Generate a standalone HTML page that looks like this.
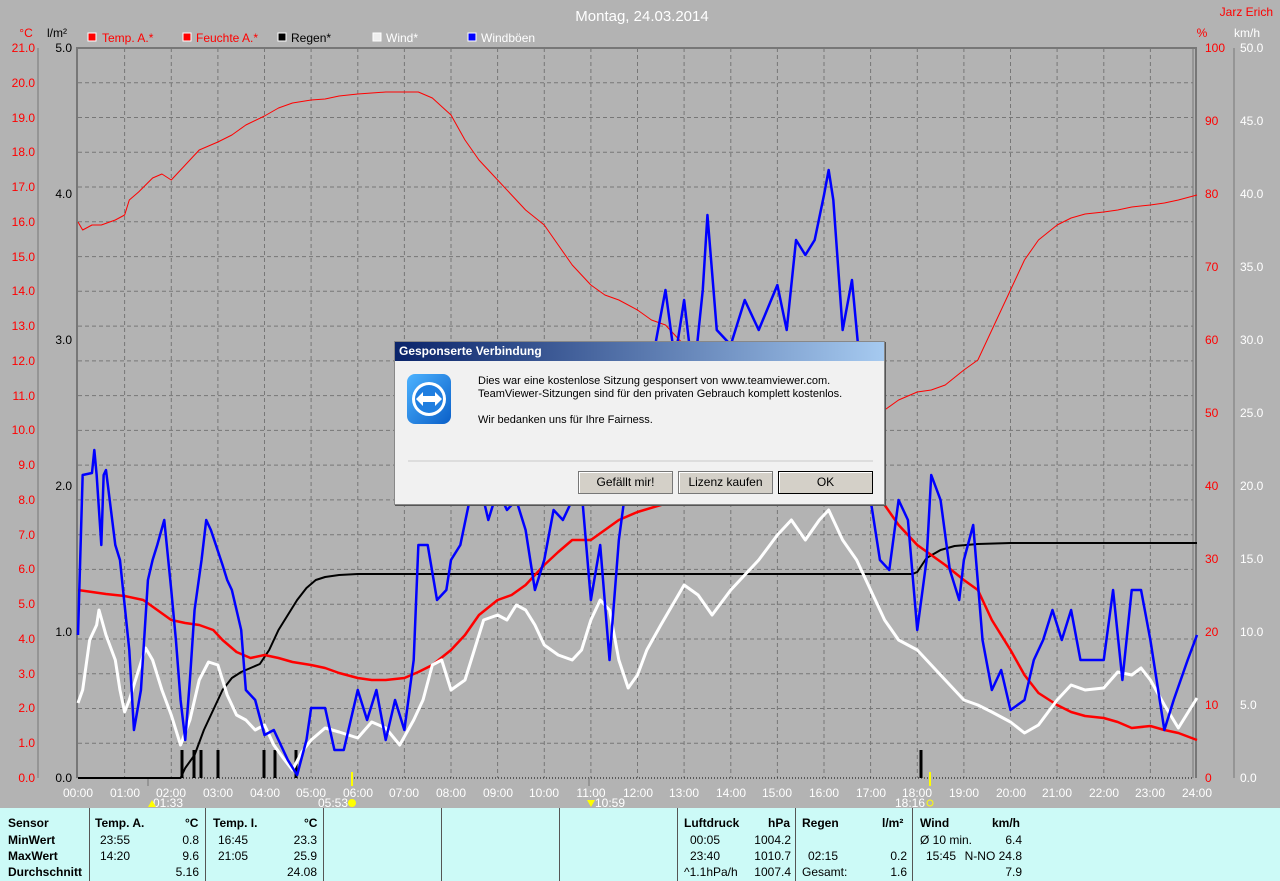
<!DOCTYPE html>
<html><head><meta charset="utf-8"><style>
html,body{margin:0;padding:0;background:#b3b3b3;width:1280px;height:881px;overflow:hidden;font-family:"Liberation Sans",sans-serif}
svg{position:absolute;left:0;top:0}
.tbl{position:absolute;left:0;top:808px;width:1280px;height:73px;background:#ccfaf7;font-size:12px;color:#000}
.sep{position:absolute;top:0;width:1px;height:73px;background:#555}
.t{position:absolute;white-space:nowrap}
.b{font-weight:bold}
.dlg{position:absolute;left:394px;top:341px;width:489px;height:162px;background:#f1f1f1;border:1px solid #888;box-shadow:1px 1px 0 #555}
.ttl{height:19px;background:linear-gradient(90deg,#0a246a,#a6caf0);color:#fff;font-weight:bold;font-size:12px;line-height:19px;padding-left:4px}
.btn{position:absolute;top:129px;height:21px;background:#d4d0c8;border:1px solid #777;font-size:12px;text-align:center;line-height:21px;box-shadow:inset 1px 1px 0 #fff}
</style></head><body>
<svg width="1280" height="808" font-family="Liberation Sans, sans-serif" font-size="12">
<text x="642" y="21" fill="#fff" font-size="15" text-anchor="middle">Montag, 24.03.2014</text>
<text x="1273" y="16" fill="#f00" text-anchor="end">Jarz Erich</text>
<text x="26" y="37" fill="#f00" text-anchor="middle">°C</text>
<text x="57" y="37" fill="#000" text-anchor="middle">l/m²</text>
<text x="1202" y="37" fill="#f00" text-anchor="middle">%</text>
<text x="1247" y="37" fill="#fff" text-anchor="middle">km/h</text>
<rect x="88" y="33" width="8" height="8" fill="#f00" stroke="#fff"/><text x="102" y="42" fill="#f00">Temp. A.*</text>
<rect x="183" y="33" width="8" height="8" fill="#f00" stroke="#fff"/><text x="196" y="42" fill="#f00">Feuchte A.*</text>
<rect x="278" y="33" width="8" height="8" fill="#000" stroke="#fff"/><text x="291" y="42" fill="#000">Regen*</text>
<rect x="373" y="33" width="8" height="8" fill="#eee" stroke="#fff"/><text x="386" y="42" fill="#fff">Wind*</text>
<rect x="468" y="33" width="8" height="8" fill="#00f" stroke="#fff"/><text x="481" y="42" fill="#fff">Windböen</text>
<!-- grid -->
<g stroke="#777" stroke-dasharray="4,3" stroke-width="1">
<line x1="78" x2="1193" y1="82.8" y2="82.8"/><line x1="78" x2="1193" y1="117.5" y2="117.5"/><line x1="78" x2="1193" y1="152.3" y2="152.3"/><line x1="78" x2="1193" y1="187" y2="187"/><line x1="78" x2="1193" y1="221.8" y2="221.8"/><line x1="78" x2="1193" y1="256.6" y2="256.6"/><line x1="78" x2="1193" y1="291.3" y2="291.3"/><line x1="78" x2="1193" y1="326.1" y2="326.1"/><line x1="78" x2="1193" y1="360.9" y2="360.9"/><line x1="78" x2="1193" y1="395.6" y2="395.6"/><line x1="78" x2="1193" y1="430.4" y2="430.4"/><line x1="78" x2="1193" y1="465.1" y2="465.1"/><line x1="78" x2="1193" y1="499.9" y2="499.9"/><line x1="78" x2="1193" y1="534.7" y2="534.7"/><line x1="78" x2="1193" y1="569.4" y2="569.4"/><line x1="78" x2="1193" y1="604.2" y2="604.2"/><line x1="78" x2="1193" y1="639" y2="639"/><line x1="78" x2="1193" y1="673.7" y2="673.7"/><line x1="78" x2="1193" y1="708.5" y2="708.5"/><line x1="78" x2="1193" y1="743.2" y2="743.2"/>
<line y1="48" y2="778" x1="124.6" x2="124.6"/><line y1="48" y2="778" x1="171.3" x2="171.3"/><line y1="48" y2="778" x1="217.9" x2="217.9"/><line y1="48" y2="778" x1="264.5" x2="264.5"/><line y1="48" y2="778" x1="311.1" x2="311.1"/><line y1="48" y2="778" x1="357.8" x2="357.8"/><line y1="48" y2="778" x1="404.4" x2="404.4"/><line y1="48" y2="778" x1="451" x2="451"/><line y1="48" y2="778" x1="497.6" x2="497.6"/><line y1="48" y2="778" x1="544.3" x2="544.3"/><line y1="48" y2="778" x1="590.9" x2="590.9"/><line y1="48" y2="778" x1="637.5" x2="637.5"/><line y1="48" y2="778" x1="684.1" x2="684.1"/><line y1="48" y2="778" x1="730.8" x2="730.8"/><line y1="48" y2="778" x1="777.4" x2="777.4"/><line y1="48" y2="778" x1="824" x2="824"/><line y1="48" y2="778" x1="870.6" x2="870.6"/><line y1="48" y2="778" x1="917.3" x2="917.3"/><line y1="48" y2="778" x1="963.9" x2="963.9"/><line y1="48" y2="778" x1="1010.5" x2="1010.5"/><line y1="48" y2="778" x1="1057.1" x2="1057.1"/><line y1="48" y2="778" x1="1103.8" x2="1103.8"/><line y1="48" y2="778" x1="1150.4" x2="1150.4"/>
</g>
<!-- frame -->
<g stroke="#777" fill="none">
<line x1="77" y1="48" x2="1197" y2="48" stroke-width="2"/>
<line x1="77" y1="47" x2="77" y2="778" stroke-width="2"/>
<line x1="1193" y1="48" x2="1193" y2="778"/><line x1="1196" y1="48" x2="1196" y2="778" stroke-width="2"/>
<line x1="38" y1="48" x2="38" y2="778"/><line x1="1234" y1="48" x2="1234" y2="778"/>
</g>
<line x1="78" y1="778" x2="1193" y2="778" stroke="#000" stroke-dasharray="1,2"/>
<!-- left temp labels -->
<g fill="#f00" text-anchor="end" font-size="12">
<text x="35" y="52">21.0</text><text x="35" y="87">20.0</text><text x="35" y="122">19.0</text><text x="35" y="156">18.0</text><text x="35" y="191">17.0</text><text x="35" y="226">16.0</text><text x="35" y="261">15.0</text><text x="35" y="295">14.0</text><text x="35" y="330">13.0</text><text x="35" y="365">12.0</text><text x="35" y="400">11.0</text><text x="35" y="434">10.0</text><text x="35" y="469">9.0</text><text x="35" y="504">8.0</text><text x="35" y="539">7.0</text><text x="35" y="573">6.0</text><text x="35" y="608">5.0</text><text x="35" y="643">4.0</text><text x="35" y="678">3.0</text><text x="35" y="712">2.0</text><text x="35" y="747">1.0</text><text x="35" y="782">0.0</text>
</g>
<g fill="#000" text-anchor="end"><text x="72" y="52">5.0</text><text x="72" y="198">4.0</text><text x="72" y="344">3.0</text><text x="72" y="490">2.0</text><text x="72" y="636">1.0</text><text x="72" y="782">0.0</text></g>
<g fill="#f00"><text x="1205" y="52">100</text><text x="1205" y="125">90</text><text x="1205" y="198">80</text><text x="1205" y="271">70</text><text x="1205" y="344">60</text><text x="1205" y="417">50</text><text x="1205" y="490">40</text><text x="1205" y="563">30</text><text x="1205" y="636">20</text><text x="1205" y="709">10</text><text x="1205" y="782">0</text></g>
<g fill="#fff"><text x="1240" y="52">50.0</text><text x="1240" y="125">45.0</text><text x="1240" y="198">40.0</text><text x="1240" y="271">35.0</text><text x="1240" y="344">30.0</text><text x="1240" y="417">25.0</text><text x="1240" y="490">20.0</text><text x="1240" y="563">15.0</text><text x="1240" y="636">10.0</text><text x="1240" y="709">5.0</text><text x="1240" y="782">0.0</text></g>
<!-- time labels -->
<g fill="#fff" text-anchor="middle">
<text x="78" y="797">00:00</text><text x="125" y="797">01:00</text><text x="171" y="797">02:00</text><text x="218" y="797">03:00</text><text x="265" y="797">04:00</text><text x="311" y="797">05:00</text><text x="358" y="797">06:00</text><text x="404" y="797">07:00</text><text x="451" y="797">08:00</text><text x="498" y="797">09:00</text><text x="544" y="797">10:00</text><text x="591" y="797">11:00</text><text x="638" y="797">12:00</text><text x="684" y="797">13:00</text><text x="731" y="797">14:00</text><text x="777" y="797">15:00</text><text x="824" y="797">16:00</text><text x="871" y="797">17:00</text><text x="917" y="797">18:00</text><text x="964" y="797">19:00</text><text x="1011" y="797">20:00</text><text x="1057" y="797">21:00</text><text x="1104" y="797">22:00</text><text x="1150" y="797">23:00</text><text x="1197" y="797">24:00</text>
<text x="168" y="807">01:33</text><text x="333" y="807">05:53</text><text x="610" y="807">10:59</text><text x="910" y="807">18:16</text>
</g>
<circle cx="352" cy="803" r="4" fill="#ff0"/><circle cx="930" cy="803" r="3" fill="none" stroke="#ff0"/>
<polygon points="148,807 152,800 156,807" fill="#ff0"/><polygon points="587,800 591,807 595,800" fill="#ff0"/>
<line x1="352" y1="772" x2="352" y2="786" stroke="#ff0" stroke-width="2"/><line x1="930" y1="772" x2="930" y2="786" stroke="#ff0" stroke-width="2"/>
<line x1="148" y1="778" x2="148" y2="786" stroke="#777"/><line x1="589" y1="778" x2="589" y2="786" stroke="#777"/>
<!-- rain bars -->
<g stroke="#000" stroke-width="3"><line x1="182" y1="750" x2="182" y2="778"/><line x1="194" y1="750" x2="194" y2="778"/><line x1="201" y1="750" x2="201" y2="778"/><line x1="218" y1="750" x2="218" y2="778"/><line x1="264" y1="750" x2="264" y2="778"/><line x1="275" y1="750" x2="275" y2="778"/><line x1="296" y1="750" x2="296" y2="778"/><line x1="921" y1="750" x2="921" y2="778"/></g>
<g transform="translate(78,0) scale(46.625,1)" fill="none" stroke-linejoin="round">
<!-- humidity -->
<polyline vector-effect="non-scaling-stroke" stroke="#f00" stroke-width="1" points="0,222 0.1,230 0.3,225 0.5,225 0.8,220 1,215 1.1,200 1.3,192 1.6,178 1.8,174 2,180 2.3,165 2.6,150 3,142 3.3,135 3.6,125 4,116 4.3,108 4.6,103 5,100 5.3,99 5.6,96 6,94 6.3,93 6.6,92 7,92 7.3,92 7.6,98 8,115 8.3,140 8.6,160 9,180 9.3,195 9.6,210 10,225 10.3,245 10.6,265 10.8,275 11,285 11.3,295 11.6,300 12,310 12.3,320 12.6,325 13,345 13.5,360 14,375 14.5,385 15,395 15.5,410 16,420 16.5,425 17,420 17.3,410 17.6,400 18,392 18.3,390 18.6,385 19,370 19.3,360 19.6,330 20,290 20.3,260 20.6,240 21,225 21.3,218 21.6,214 22,212 22.3,210 22.6,207 23,205 23.3,203 23.6,200 24,195"/>
<!-- rain cumulative -->
<polyline vector-effect="non-scaling-stroke" stroke="#000" stroke-width="2" points="0,778 2.2,778 2.3,768 2.5,755 2.7,730 2.9,710 3.1,690 3.3,678 3.5,672 3.7,668 3.9,664 4.1,650 4.3,630 4.5,615 4.7,600 4.9,588 5.1,580 5.3,577 5.6,575 6,574 17.9,574 18,572 18.2,558 18.5,550 18.8,546 19.3,544 20,543 24,543"/>
<!-- temp -->
<polyline vector-effect="non-scaling-stroke" stroke="#f00" stroke-width="2.5" points="0,590 0.3,592 0.6,594 1,596 1.4,600 1.7,610 2,620 2.3,623 2.6,625 2.9,630 3.1,640 3.4,652 3.7,658 4,655 4.3,658 4.6,662 5,665 5.3,668 5.6,673 6,678 6.3,680 6.6,680 7,678 7.3,672 7.6,665 8,650 8.3,635 8.6,615 9,600 9.3,595 9.6,585 10,565 10.3,552 10.6,540 11,540 11.3,530 11.6,520 12,512 12.5,505 13,500 14,495 15,490 16,482 17,490 17.3,505 17.6,525 18,545 18.3,555 18.6,565 19,580 19.3,590 19.6,620 20,650 20.3,675 20.6,693 21,705 21.3,712 21.6,716 22,718 22.3,722 22.6,728 23,726 23.3,730 23.6,733 24,740"/>
<!-- wind -->
<polyline vector-effect="non-scaling-stroke" stroke="#fff" stroke-width="3" points="0,703 0.1,690 0.25,640 0.4,625 0.45,610 0.6,635 0.8,660 0.9,690 1,712 1.1,700 1.3,670 1.45,648 1.6,660 1.8,690 2,715 2.2,745 2.4,720 2.6,680 2.8,662 3,665 3.2,695 3.4,715 3.6,720 3.8,730 4,725 4.2,745 4.4,758 4.6,770 4.8,752 5,740 5.3,728 5.6,732 6,738 6.3,722 6.6,728 6.9,745 7.2,720 7.4,700 7.6,665 7.8,660 8,690 8.3,680 8.5,650 8.7,620 9,615 9.2,620 9.4,605 9.6,610 9.8,625 10,645 10.3,655 10.6,660 10.8,650 11,620 11.2,600 11.4,610 11.6,660 11.8,688 12,675 12.2,650 12.5,625 13,585 13.3,595 13.6,615 14,590 14.3,575 14.6,560 15,535 15.3,520 15.6,540 15.9,520 16.1,510 16.4,540 16.7,560 17,590 17.3,620 17.6,640 18,650 18.3,665 18.6,680 19,700 19.3,705 19.6,712 20,722 20.3,733 20.6,725 21,700 21.3,685 21.6,690 22,688 22.3,672 22.6,675 22.8,668 23,680 23.3,705 23.6,728 24,698"/>
<!-- gusts -->
<polyline vector-effect="non-scaling-stroke" stroke="#00f" stroke-width="2.5" points="0,635 0.1,475 0.3,473 0.35,450 0.4,475 0.5,545 0.55,475 0.6,470 0.8,545 0.9,560 1,605 1.1,650 1.2,730 1.35,690 1.5,580 1.6,560 1.7,545 1.85,520 2,590 2.1,640 2.2,700 2.3,740 2.4,680 2.5,610 2.65,560 2.75,520 2.85,530 3.1,565 3.2,580 3.3,590 3.5,630 3.6,690 3.8,700 4,735 4.2,730 4.5,760 4.7,775 4.9,740 5,708 5.3,708 5.5,750 5.7,750 6,690 6.2,720 6.4,690 6.6,740 6.8,700 7,730 7.2,660 7.3,545 7.5,545 7.7,600 7.9,590 8,560 8.2,545 8.4,500 8.6,480 8.8,520 9,490 9.2,510 9.4,500 9.6,530 9.8,590 10,560 10.2,510 10.4,520 10.6,500 10.8,490 11,600 11.2,545 11.4,660 11.6,540 11.8,470 12,440 12.2,400 12.4,340 12.6,290 12.8,360 13,300 13.2,380 13.4,290 13.5,215 13.7,330 14,345 14.3,300 14.6,330 15,285 15.2,330 15.4,240 15.6,255 15.8,240 16,195 16.1,170 16.2,200 16.4,330 16.6,280 16.8,380 17,500 17.2,560 17.4,570 17.6,500 17.8,520 18,630 18.2,560 18.3,475 18.5,500 18.7,570 18.9,600 19,560 19.2,525 19.4,640 19.6,690 19.8,670 20,710 20.3,700 20.5,660 20.7,640 20.9,610 21.1,640 21.3,610 21.5,660 22,660 22.2,590 22.4,680 22.6,590 22.8,590 23,640 23.3,730 23.5,700 23.8,660 24,635"/>
</g>
</svg>
<div class="dlg">
<div class="ttl">Gesponserte Verbindung</div>
<svg width="50" height="60" style="left:10px;top:30px" viewBox="0 0 50 60"><defs><linearGradient id="g" x1="0" y1="0" x2="1" y2="1"><stop offset="0" stop-color="#4db3ff"/><stop offset="1" stop-color="#0a5fc8"/></linearGradient></defs><rect x="2" y="2" width="44" height="50" rx="8" fill="url(#g)"/><circle cx="24" cy="27" r="17" fill="#fff"/><circle cx="24" cy="27" r="14" fill="#1f7ee0"/><path d="M11 27 L18 20 L18 24 L30 24 L30 20 L37 27 L30 34 L30 30 L18 30 L18 34 Z" fill="#fff"/></svg>
<div class="t" style="left:83px;top:33px;font-size:11px;line-height:13px">Dies war eine kostenlose Sitzung gesponsert von www.teamviewer.com.<br>TeamViewer-Sitzungen sind für den privaten Gebrauch komplett kostenlos.<br><br>Wir bedanken uns für Ihre Fairness.</div>
<div style="position:absolute;left:13px;top:118px;width:465px;height:2px;background:#ddd"></div>
<div class="btn" style="left:183px;width:93px">Gefällt mir!</div>
<div class="btn" style="left:283px;width:93px">Lizenz kaufen</div>
<div class="btn" style="left:383px;width:93px;border:1px solid #000">OK</div>
</div>
<div class="tbl">
<div class="sep" style="left:89px"></div><div class="sep" style="left:205px"></div><div class="sep" style="left:323px"></div><div class="sep" style="left:441px"></div><div class="sep" style="left:559px"></div><div class="sep" style="left:677px"></div><div class="sep" style="left:795px"></div><div class="sep" style="left:912px"></div>
<div class="t b" style="left:8px;top:8px">Sensor</div><div class="t b" style="left:8px;top:25px">MinWert</div><div class="t b" style="left:8px;top:41px">MaxWert</div><div class="t b" style="left:8px;top:57px">Durchschnitt</div>
<div class="t b" style="left:95px;top:8px">Temp. A.</div><div class="t b" style="left:185px;top:8px">°C</div>
<div class="t" style="left:100px;top:25px">23:55</div><div class="t" style="left:100px;top:41px">14:20</div>
<div class="t" style="right:1081px;top:25px">0.8</div><div class="t" style="right:1081px;top:41px">9.6</div><div class="t" style="right:1081px;top:57px">5.16</div>
<div class="t b" style="left:213px;top:8px">Temp. I.</div><div class="t b" style="left:304px;top:8px">°C</div>
<div class="t" style="left:218px;top:25px">16:45</div><div class="t" style="left:218px;top:41px">21:05</div>
<div class="t" style="right:963px;top:25px">23.3</div><div class="t" style="right:963px;top:41px">25.9</div><div class="t" style="right:963px;top:57px">24.08</div>
<div class="t b" style="left:684px;top:8px">Luftdruck</div><div class="t b" style="left:768px;top:8px">hPa</div>
<div class="t" style="left:690px;top:25px">00:05</div><div class="t" style="left:690px;top:41px">23:40</div><div class="t" style="left:684px;top:57px">^1.1hPa/h</div>
<div class="t" style="right:489px;top:25px">1004.2</div><div class="t" style="right:489px;top:41px">1010.7</div><div class="t" style="right:489px;top:57px">1007.4</div>
<div class="t b" style="left:802px;top:8px">Regen</div><div class="t b" style="left:882px;top:8px">l/m²</div>
<div class="t" style="left:808px;top:41px">02:15</div><div class="t" style="left:802px;top:57px">Gesamt:</div>
<div class="t" style="right:373px;top:41px">0.2</div><div class="t" style="right:373px;top:57px">1.6</div>
<div class="t b" style="left:920px;top:8px">Wind</div><div class="t b" style="left:992px;top:8px">km/h</div>
<div class="t" style="left:920px;top:25px">Ø 10 min.</div><div class="t" style="left:926px;top:41px">15:45</div>
<div class="t" style="right:258px;top:25px">6.4</div><div class="t" style="right:258px;top:41px">N-NO 24.8</div><div class="t" style="right:258px;top:57px">7.9</div>
</div>
</body></html>
